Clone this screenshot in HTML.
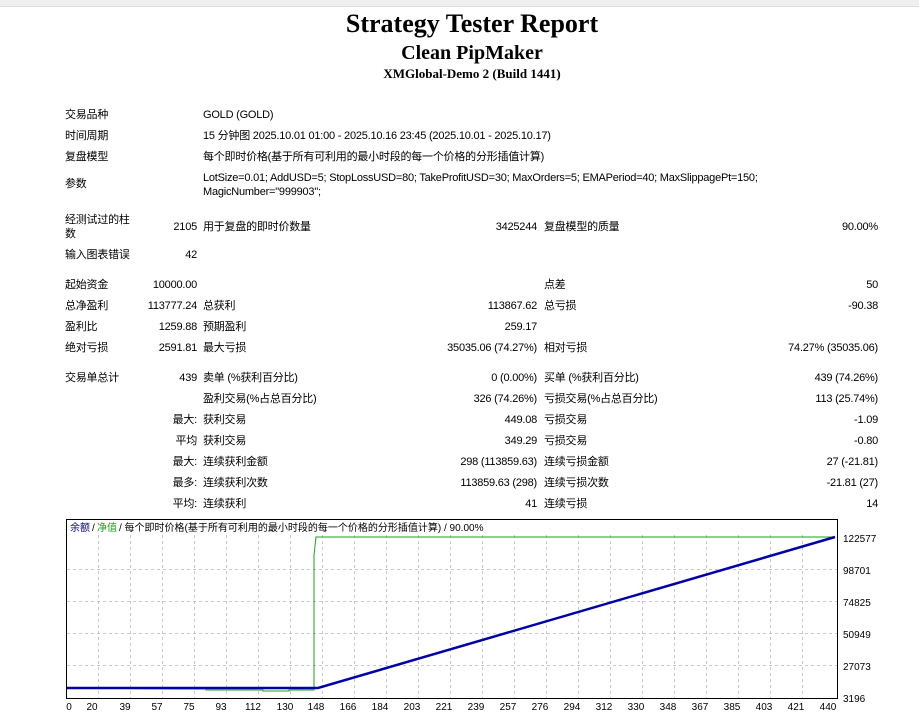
<!DOCTYPE html>
<html><head><meta charset="utf-8">
<style>
body{margin:0;width:919px;height:719px;background:#fff;position:relative;overflow:hidden;font-family:"Liberation Sans","Noto Sans CJK SC",sans-serif;font-size:11px;color:#000}
.bar{position:absolute;left:0;top:0;width:919px;height:6px;background:#f0f0f0;border-bottom:1px solid #ddd}
.t{position:absolute;left:0;width:944px;text-align:center;font-family:"Liberation Serif",serif;font-weight:bold}
.c{position:absolute;white-space:nowrap;line-height:14px;letter-spacing:-0.22px}
.r{text-align:right}
</style></head><body>
<div class="bar"></div>
<div class="t" style="top:9px;font-size:26px">Strategy Tester Report</div>
<div class="t" style="top:42px;font-size:20px">Clean PipMaker</div>
<div class="t" style="top:66px;font-size:13px">XMGlobal-Demo 2 (Build 1441)</div>

<div class="c" style="left:65px;top:108px">交易品种</div><div class="c" style="left:203px;top:108px">GOLD (GOLD)</div>
<div class="c" style="left:65px;top:129px">时间周期</div><div class="c" style="left:203px;top:129px">15 分钟图 2025.10.01 01:00 - 2025.10.16 23:45 (2025.10.01 - 2025.10.17)</div>
<div class="c" style="left:65px;top:150px">复盘模型</div><div class="c" style="left:203px;top:150px">每个即时价格(基于所有可利用的最小时段的每一个价格的分形插值计算)</div>
<div class="c" style="left:65px;top:177px">参数</div><div class="c" style="left:203px;top:171px">LotSize=0.01; AddUSD=5; StopLossUSD=80; TakeProfitUSD=30; MaxOrders=5; EMAPeriod=40; MaxSlippagePt=150;<br>MagicNumber="999903";</div>
<div class="c" style="left:65px;top:213px">经测试过的柱<br>数</div><div class="c r" style="left:140px;width:57px;top:220px">2105</div><div class="c" style="left:203px;top:220px">用于复盘的即时价数量</div><div class="c r" style="left:437px;width:100px;top:220px">3425244</div><div class="c" style="left:544px;top:220px">复盘模型的质量</div><div class="c r" style="left:778px;width:100px;top:220px">90.00%</div>
<div class="c" style="left:65px;top:248px">输入图表错误</div><div class="c r" style="left:140px;width:57px;top:248px">42</div>

<div class="c" style="left:65px;top:278px">起始资金</div><div class="c r" style="left:120px;width:77px;top:278px">10000.00</div><div class="c" style="left:544px;top:278px">点差</div><div class="c r" style="left:778px;width:100px;top:278px">50</div>
<div class="c" style="left:65px;top:299px">总净盈利</div><div class="c r" style="left:110px;width:87px;top:299px">113777.24</div><div class="c" style="left:203px;top:299px">总获利</div><div class="c r" style="left:437px;width:100px;top:299px">113867.62</div><div class="c" style="left:544px;top:299px">总亏损</div><div class="c r" style="left:778px;width:100px;top:299px">-90.38</div>
<div class="c" style="left:65px;top:320px">盈利比</div><div class="c r" style="left:110px;width:87px;top:320px">1259.88</div><div class="c" style="left:203px;top:320px">预期盈利</div><div class="c r" style="left:437px;width:100px;top:320px">259.17</div>
<div class="c" style="left:65px;top:341px">绝对亏损</div><div class="c r" style="left:110px;width:87px;top:341px">2591.81</div><div class="c" style="left:203px;top:341px">最大亏损</div><div class="c r" style="left:387px;width:150px;top:341px">35035.06 (74.27%)</div><div class="c" style="left:544px;top:341px">相对亏损</div><div class="c r" style="left:728px;width:150px;top:341px">74.27% (35035.06)</div>

<div class="c" style="left:65px;top:371px">交易单总计</div><div class="c r" style="left:110px;width:87px;top:371px">439</div><div class="c" style="left:203px;top:371px">卖单 (%获利百分比)</div><div class="c r" style="left:387px;width:150px;top:371px">0 (0.00%)</div><div class="c" style="left:544px;top:371px">买单 (%获利百分比)</div><div class="c r" style="left:728px;width:150px;top:371px">439 (74.26%)</div>
<div class="c" style="left:203px;top:392px">盈利交易(%占总百分比)</div><div class="c r" style="left:387px;width:150px;top:392px">326 (74.26%)</div><div class="c" style="left:544px;top:392px">亏损交易(%占总百分比)</div><div class="c r" style="left:728px;width:150px;top:392px">113 (25.74%)</div>
<div class="c r" style="left:110px;width:87px;top:413px">最大:</div><div class="c" style="left:203px;top:413px">获利交易</div><div class="c r" style="left:387px;width:150px;top:413px">449.08</div><div class="c" style="left:544px;top:413px">亏损交易</div><div class="c r" style="left:728px;width:150px;top:413px">-1.09</div>
<div class="c r" style="left:110px;width:87px;top:434px">平均</div><div class="c" style="left:203px;top:434px">获利交易</div><div class="c r" style="left:387px;width:150px;top:434px">349.29</div><div class="c" style="left:544px;top:434px">亏损交易</div><div class="c r" style="left:728px;width:150px;top:434px">-0.80</div>
<div class="c r" style="left:110px;width:87px;top:455px">最大:</div><div class="c" style="left:203px;top:455px">连续获利金额</div><div class="c r" style="left:387px;width:150px;top:455px">298 (113859.63)</div><div class="c" style="left:544px;top:455px">连续亏损金额</div><div class="c r" style="left:728px;width:150px;top:455px">27 (-21.81)</div>
<div class="c r" style="left:110px;width:87px;top:476px">最多:</div><div class="c" style="left:203px;top:476px">连续获利次数</div><div class="c r" style="left:387px;width:150px;top:476px">113859.63 (298)</div><div class="c" style="left:544px;top:476px">连续亏损次数</div><div class="c r" style="left:728px;width:150px;top:476px">-21.81 (27)</div>
<div class="c r" style="left:110px;width:87px;top:497px">平均:</div><div class="c" style="left:203px;top:497px">连续获利</div><div class="c r" style="left:387px;width:150px;top:497px">41</div><div class="c" style="left:544px;top:497px">连续亏损</div><div class="c r" style="left:728px;width:150px;top:497px">14</div>

<svg style="position:absolute;left:0;top:0" width="919" height="719" font-family="Liberation Sans, Noto Sans CJK SC, sans-serif" font-size="10">
<rect x="66.5" y="519.5" width="771" height="179" fill="#fff" stroke="#000"/>
<g stroke="#c8c8c8" stroke-dasharray="3,3">
<line x1="67" x2="837" y1="569.5" y2="569.5"/><line x1="67" x2="837" y1="601.5" y2="601.5"/><line x1="67" x2="837" y1="633.5" y2="633.5"/><line x1="67" x2="837" y1="665.5" y2="665.5"/>
<line x1="98.5" x2="98.5" y1="535" y2="698"/><line x1="130.5" x2="130.5" y1="535" y2="698"/><line x1="162.5" x2="162.5" y1="535" y2="698"/><line x1="194.5" x2="194.5" y1="535" y2="698"/><line x1="226.5" x2="226.5" y1="535" y2="698"/><line x1="258.5" x2="258.5" y1="535" y2="698"/><line x1="290.5" x2="290.5" y1="535" y2="698"/><line x1="322.5" x2="322.5" y1="535" y2="698"/><line x1="354.5" x2="354.5" y1="535" y2="698"/><line x1="386.5" x2="386.5" y1="535" y2="698"/><line x1="418.5" x2="418.5" y1="535" y2="698"/><line x1="450.5" x2="450.5" y1="535" y2="698"/><line x1="482.5" x2="482.5" y1="535" y2="698"/><line x1="514.5" x2="514.5" y1="535" y2="698"/><line x1="546.5" x2="546.5" y1="535" y2="698"/><line x1="578.5" x2="578.5" y1="535" y2="698"/><line x1="610.5" x2="610.5" y1="535" y2="698"/><line x1="642.5" x2="642.5" y1="535" y2="698"/><line x1="674.5" x2="674.5" y1="535" y2="698"/><line x1="706.5" x2="706.5" y1="535" y2="698"/><line x1="738.5" x2="738.5" y1="535" y2="698"/><line x1="770.5" x2="770.5" y1="535" y2="698"/><line x1="802.5" x2="802.5" y1="535" y2="698"/>
</g>
<polyline fill="none" stroke="#1aa01a" stroke-width="1" points="67,688 182,689 206,689 206,690 243,690 263,690 263,691 289,691 289,690 314,690 314,555 316,537 835,537"/>
<polyline fill="none" stroke="#0000a8" stroke-width="2.5" points="67,688 318,688 835,537"/>
<text x="70" y="531" fill="#000080">余额</text><text x="92" y="531">/</text><text x="97" y="531" fill="#1aa01a">净值</text><text x="119" y="531">/ 每个即时价格(基于所有可利用的最小时段的每一个价格的分形插值计算) / 90.00%</text>
<g fill="#000">
<text x="843" y="542">122577</text><text x="843" y="574">98701</text><text x="843" y="606">74825</text><text x="843" y="638">50949</text><text x="843" y="670">27073</text><text x="843" y="702">3196</text>
</g>
<g text-anchor="middle">
<text x="69" y="710">0</text><text x="92" y="710">20</text><text x="125" y="710">39</text><text x="157" y="710">57</text><text x="189" y="710">75</text><text x="221" y="710">93</text><text x="253" y="710">112</text><text x="285" y="710">130</text><text x="316" y="710">148</text><text x="348" y="710">166</text><text x="380" y="710">184</text><text x="412" y="710">203</text><text x="444" y="710">221</text><text x="476" y="710">239</text><text x="508" y="710">257</text><text x="540" y="710">276</text><text x="572" y="710">294</text><text x="604" y="710">312</text><text x="636" y="710">330</text><text x="668" y="710">348</text><text x="700" y="710">367</text><text x="732" y="710">385</text><text x="764" y="710">403</text><text x="796" y="710">421</text><text x="828" y="710">440</text>
</g>
</svg>
</body></html>
